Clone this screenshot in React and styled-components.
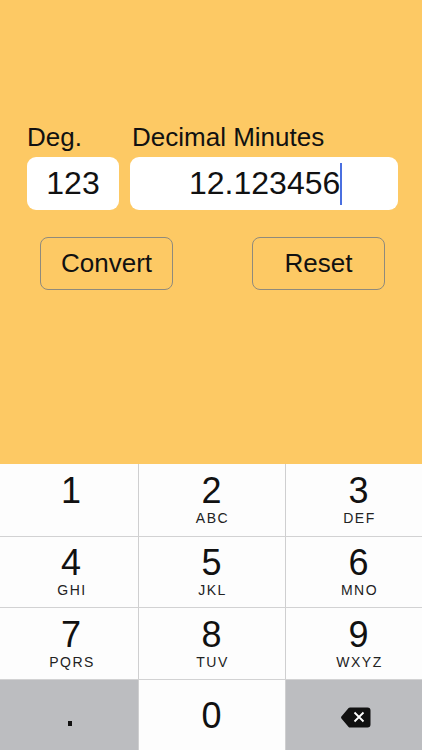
import React from "react";
import styled, { createGlobalStyle } from "styled-components";

const Global = createGlobalStyle`
  html, body { margin: 0; padding: 0; }
  body { font-family: "Liberation Sans", Arial, sans-serif; background: #fdc964; }
`;

const Screen = styled.div`
  width: 422px;
  height: 750px;
  display: flex;
  flex-direction: column;
  overflow: hidden;
  background: #fdc964;
  color: #111;
`;

const Form = styled.div`
  height: 464px;
  box-sizing: border-box;
  padding: 123px 24px 0 27px;
`;

const Fields = styled.div`
  display: grid;
  grid-template-columns: 92px 268px;
  column-gap: 11px;
`;

const Field = styled.div`
  display: flex;
  flex-direction: column;
  gap: 5px;
`;

const Label = styled.label`
  font-size: 26px;
  line-height: 29px;
  padding-left: ${(p) => p.$indent || 0}px;
  color: #111;
`;

const Input = styled.div`
  height: 53px;
  border-radius: 9px;
  background: #fff;
  display: flex;
  align-items: center;
  justify-content: ${(p) => (p.$active ? "flex-start" : "center")};
  padding-left: ${(p) => (p.$active ? 59 : 0)}px;
  font-size: 32px;
  color: #111;
`;

const Caret = styled.span`
  width: 2px;
  height: 42px;
  background: #4a6fe0;
`;

const Actions = styled.div`
  display: flex;
  justify-content: space-between;
  margin: 27px 13px 0 13px;
`;

const Action = styled.button`
  width: 133px;
  height: 53px;
  box-sizing: border-box;
  border: 1px solid #8f8a7c;
  border-radius: 8px;
  background: transparent;
  font-family: inherit;
  font-size: 26px;
  color: #111;
  padding: 0;
`;

const Keypad = styled.div`
  flex: 1;
  display: grid;
  grid-template-columns: 139px 147px 136px;
  grid-template-rows: 73px 71px 72px 70px;
  background: #fdfdfd;
`;

const Key = styled.div`
  box-sizing: border-box;
  display: flex;
  flex-direction: column;
  align-items: center;
  background: ${(p) => (p.$dark ? "#bcbdc0" : "#fdfdfd")};
  border-right: ${(p) => (p.$last ? "0" : "1px solid #cfcfd0")};
  border-bottom: ${(p) => (p.$bottom ? "0" : "1px solid #d2d2d3")};
  padding-top: ${(p) => p.$top ?? 6}px;
  padding-left: ${(p) => p.$shift || 0}px;
`;

const Digit = styled.span`
  font-size: 36px;
  line-height: 41px;
  margin-right: 2px;
  color: #111;
`;

const Letters = styled.span`
  font-size: 14px;
  line-height: 15px;
  letter-spacing: 1.5px;
  color: #222;
`;

const Dot = styled.span`
  width: 4.5px;
  height: 4.5px;
  margin-top: 35px;
  margin-right: 4px;
  background: #111;
`;

const BackspaceIcon = styled.svg`
  margin-top: 21px;
  margin-right: 8px;
`;

const shifts = [6, 1, 11];
const rowTops = [6, 5, 6];

const rows = [
  [["1", ""], ["2", "ABC"], ["3", "DEF"]],
  [["4", "GHI"], ["5", "JKL"], ["6", "MNO"]],
  [["7", "PQRS"], ["8", "TUV"], ["9", "WXYZ"]],
];

export default function App() {
  return (
    <Screen>
      <Global />
      <Form>
        <Fields>
          <Field>
            <Label>Deg.</Label>
            <Input>123</Input>
          </Field>
          <Field>
            <Label $indent={2}>Decimal Minutes</Label>
            <Input $active>
              12.123456
              <Caret />
            </Input>
          </Field>
        </Fields>
        <Actions>
          <Action>Convert</Action>
          <Action>Reset</Action>
        </Actions>
      </Form>
      <Keypad>
        {rows.map((row, r) =>
          row.map(([d, l], i) => (
            <Key key={d} $last={i === 2} $shift={shifts[i]} $top={rowTops[r]}>
              <Digit>{d}</Digit>
              {l && <Letters>{l}</Letters>}
            </Key>
          ))
        )}
        <Key $dark $bottom $shift={shifts[0]}>
          <Dot />
        </Key>
        <Key $bottom $shift={shifts[1]} $top={15}>
          <Digit>0</Digit>
        </Key>
        <Key $dark $bottom $last $shift={shifts[2]}>
          <BackspaceIcon width="30" height="21" viewBox="0 0 30 21">
            <path d="M9 0.5H26.5a3 3 0 0 1 3 3V17.5a3 3 0 0 1-3 3H9a2 2 0 0 1-1.4-.6L0.6 11.7a1.8 1.8 0 0 1 0-2.4L7.6 1.1A2 2 0 0 1 9 0.5Z" fill="#111" />
            <path d="M13.5 5.5L22.5 14.5M22.5 5.5L13.5 14.5" stroke="#fff" strokeWidth="1.8" />
          </BackspaceIcon>
        </Key>
      </Keypad>
    </Screen>
  );
}
